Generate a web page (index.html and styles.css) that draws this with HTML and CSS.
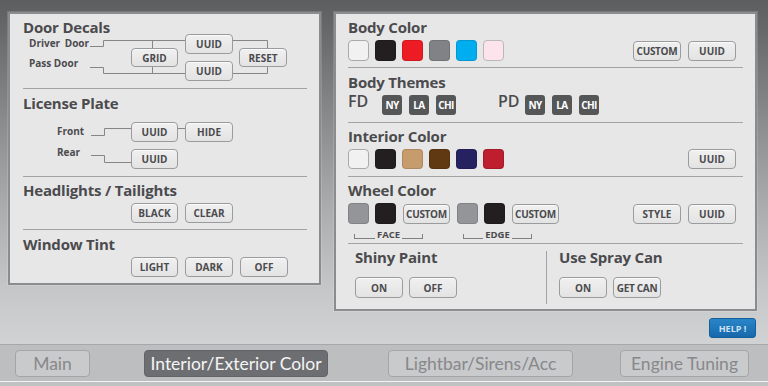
FILE: index.html
```html
<!DOCTYPE html>
<html>
<head>
<meta charset="utf-8">
<title>Interior/Exterior Color</title>
<link rel="stylesheet" href="styles.css">
</head>
<body>
<div class="screen">
  <div class="workspace">
    <section class="panel panel-left">
      <div class="group g1">
        <h2 class="title">Door Decals</h2>
        <div class="diagram d-door">
          <svg class="wires" width="284" height="52" viewBox="0 0 284 52">
            <path d="M67 10.5H80.5V4.5H162M129.5 4.5V12M210 4.5H244.5V12M67 31.5H80.5V37.5H162M129.5 31V37.5M210 37.5H244.5V31"/>
          </svg>
          <span class="lbl n-driver">Driver Door</span>
          <span class="lbl n-pass">Pass Door</span>
          <div class="btn node n-uuid1">UUID</div>
          <div class="btn node n-grid">GRID</div>
          <div class="btn node n-reset">RESET</div>
          <div class="btn node n-uuid2">UUID</div>
        </div>
      </div>
      <div class="group g2">
        <h2 class="title">License Plate</h2>
        <div class="diagram d-plate">
          <svg class="wires" width="284" height="64" viewBox="0 0 284 64">
            <path d="M68 23.5H81.5V16.5H108M155 16.5H162M68 43.5H81.5V50.5H108"/>
          </svg>
          <span class="lbl n-front">Front</span>
          <span class="lbl n-rear">Rear</span>
          <div class="btn node n-puuid">UUID</div>
          <div class="btn node n-hide">HIDE</div>
          <div class="btn node n-ruuid">UUID</div>
        </div>
      </div>
      <div class="group g3">
        <h2 class="title">Headlights / Tailights</h2>
        <div class="row opts">
          <div class="btn w47">BLACK</div>
          <div class="btn">CLEAR</div>
        </div>
      </div>
      <div class="group g4">
        <h2 class="title">Window Tint</h2>
        <div class="row opts">
          <div class="btn w47">LIGHT</div>
          <div class="btn">DARK</div>
          <div class="btn">OFF</div>
        </div>
      </div>
    </section>

    <div class="right-col">
      <section class="panel panel-right">
        <div class="group ga">
          <h2 class="title">Body Color</h2>
          <div class="row swrow">
            <span class="sw c-white"></span>
            <span class="sw c-black"></span>
            <span class="sw c-red"></span>
            <span class="sw c-gray"></span>
            <span class="sw c-cyan"></span>
            <span class="sw c-pink"></span>
            <div class="actions">
              <div class="btn tight">CUSTOM</div>
              <div class="btn">UUID</div>
            </div>
          </div>
        </div>
        <div class="group gb">
          <h2 class="title">Body Themes</h2>
          <div class="row themes">
            <span class="fd">FD</span>
            <span class="tb">NY</span>
            <span class="tb">LA</span>
            <span class="tb">CHI</span>
            <span class="fd pd">PD</span>
            <span class="tb">NY</span>
            <span class="tb">LA</span>
            <span class="tb">CHI</span>
          </div>
        </div>
        <div class="group gc">
          <h2 class="title">Interior Color</h2>
          <div class="row swrow">
            <span class="sw c-white"></span>
            <span class="sw c-black"></span>
            <span class="sw c-tan"></span>
            <span class="sw c-brown"></span>
            <span class="sw c-navy"></span>
            <span class="sw c-crimson"></span>
            <div class="actions">
              <div class="btn">UUID</div>
            </div>
          </div>
        </div>
        <div class="group gd">
          <h2 class="title">Wheel Color</h2>
          <div class="row wheelrow">
            <span class="sw c-wgray"></span>
            <span class="sw c-black"></span>
            <div class="btn w47 tight spaced">CUSTOM</div>
            <span class="sw c-wgray"></span>
            <span class="sw c-black"></span>
            <div class="btn w47 tight spaced">CUSTOM</div>
            <div class="actions">
              <div class="btn">STYLE</div>
              <div class="btn">UUID</div>
            </div>
          </div>
          <div class="brackets">
            <div class="brk"><span class="seg"></span><span class="bt">FACE</span><span class="seg"></span></div>
            <div class="brk"><span class="seg"></span><span class="bt">EDGE</span><span class="seg"></span></div>
          </div>
        </div>
        <div class="group ge">
          <div class="col col-l">
            <h2 class="title">Shiny Paint</h2>
            <div class="row pair">
              <div class="btn tall">ON</div>
              <div class="btn tall">OFF</div>
            </div>
          </div>
          <div class="vdiv"></div>
          <div class="col col-r">
            <h2 class="title">Use Spray Can</h2>
            <div class="row pair">
              <div class="btn tall">ON</div>
              <div class="btn tall tight">GET CAN</div>
            </div>
          </div>
        </div>
      </section>
      <div class="help-row">
        <div class="help">HELP !</div>
      </div>
    </div>
  </div>

  <nav class="tabbar">
    <div class="tab t-main">Main</div>
    <div class="tab t-int active">Interior/Exterior Color</div>
    <div class="tab t-light">Lightbar/Sirens/Acc</div>
    <div class="tab t-eng">Engine Tuning</div>
  </nav>
</div>
</body>
</html>
```
FILE: styles.css
```css
* { box-sizing: border-box; margin: 0; padding: 0; }
html, body { width: 768px; height: 386px; overflow: hidden; }
body {
  font-family: "Open Sans", "DejaVu Sans", sans-serif;
  color: #4b4b4d;
  background: #c0c1c3;
}
.screen { width: 768px; height: 386px; display: flex; flex-direction: column; }

.workspace {
  height: 344px;
  display: flex;
  align-items: flex-start;
  gap: 13px;
  padding: 12px 0 0 8px;
  background: linear-gradient(180deg, #5d5e60 0, #67686a 30px, #8a8b8d 120px, #acadaf 210px, #c6c7c9 290px, #d1d2d4 344px);
}

.panel {
  background: #e7e7e8;
  border: 2px solid #8b8c8e;
  box-shadow: 0 0 0 1px rgba(255, 255, 255, 0.15);
}
.panel-left { width: 313px; height: 273px; padding: 0 12px 0 13px; }
.right-col { width: 423px; display: flex; flex-direction: column; }
.panel-right { height: 299px; padding: 0 12px; }

.group { border-bottom: 1px solid #a3a4a6; }
.group:last-child { border-bottom: 0; }

.title {
  font-size: 15px;
  line-height: 18px;
  font-weight: 700;
  letter-spacing: -0.2px;
  color: #4b4b4d;
  white-space: nowrap;
}

/* left panel groups */
.g1 { height: 75px; padding-top: 4px; }
.g2 { height: 88px; padding-top: 5px; }
.g3 { height: 53px; padding-top: 4px; }
.g4 { height: 53px; padding-top: 5px; }

.row { display: flex; align-items: center; margin-top: 4px; }
.opts { gap: 7px; padding-left: 108px; }

.btn {
  display: flex;
  align-items: center;
  justify-content: center;
  width: 48px;
  height: 20px;
  border: 1px solid #9a9b9d;
  border-radius: 4px;
  background: linear-gradient(#f0f0f1, #e3e3e4);
  box-shadow: inset 0 1px 0 #fafafa;
  font-size: 10px;
  font-weight: 700;
  line-height: 1;
  color: #4b4b4d;
  white-space: nowrap;
}
.btn.w47 { width: 47px; }
.btn.tight { letter-spacing: -0.3px; }
.btn.tall { height: 21px; }

/* wiring diagrams */
.diagram { position: relative; }
.d-door { height: 52px; }
.d-plate { height: 64px; }
.wires { position: absolute; left: 0; top: 0; overflow: visible; }
.wires path { fill: none; stroke: #85868a; stroke-width: 1; }
.lbl {
  position: absolute;
  font-size: 10px;
  line-height: 13px;
  font-weight: 700;
  color: #4b4b4d;
  white-space: nowrap;
}
.node { position: absolute; }
.n-driver { left: 6px; top: 1px; word-spacing: 2px; }
.n-pass { left: 6px; top: 21px; }
.n-uuid1 { left: 162px; top: -2px; }
.n-grid { left: 108px; top: 12px; width: 47px; height: 19px; }
.n-reset { left: 216px; top: 12px; height: 19px; }
.n-uuid2 { left: 162px; top: 25px; }
.n-front { left: 34px; top: 13px; }
.n-rear { left: 34px; top: 34px; }
.n-puuid { left: 108px; top: 10px; width: 47px; }
.n-hide { left: 162px; top: 10px; }
.n-ruuid { left: 108px; top: 37px; width: 47px; }

/* right panel groups */
.ga { height: 54px; padding-top: 4px; }
.gb { height: 55px; padding-top: 5px; }
.gc { height: 54px; padding-top: 4px; }
.gd { height: 67px; padding-top: 4px; }
.ge { height: 65px; display: flex; align-items: flex-start; }

.swrow { gap: 6px; }
.actions { display: flex; gap: 7px; margin-left: auto; margin-right: 7px; }

.sw {
  width: 21px;
  height: 21px;
  border-radius: 4px;
  border: 1px solid rgba(0, 0, 0, 0.12);
}
.gc .sw { height: 20px; }
.c-white { background: #f1f1f2; border-color: #a9aaac; }
.c-black { background: #231f20; }
.c-red { background: #ed1c24; }
.c-gray { background: #808285; }
.c-cyan { background: #00aeef; }
.c-pink { background: #fde4ec; border-color: #b9b9bb; }
.c-tan { background: #c69c6d; }
.c-brown { background: #603913; }
.c-navy { background: #262262; }
.c-crimson { background: #be1e2d; }
.c-wgray { background: #939598; }

.themes { align-items: flex-start; gap: 7px; }
.fd {
  width: 27px;
  font-size: 16px;
  font-weight: 600;
  line-height: 13px;
  color: #4b4b4d;
}
.pd { margin-left: 35px; width: 20px; }
.tb {
  display: flex;
  align-items: center;
  justify-content: center;
  width: 20px;
  height: 20px;
  border-radius: 3px;
  background: #555658;
  color: #fff;
  font-size: 10px;
  font-weight: 700;
  letter-spacing: -0.6px;
}

.wheelrow { gap: 6px; }
.wheelrow .spaced { margin: 0 1px; }

.brackets { display: flex; gap: 40px; padding-left: 6px; margin-top: 6px; }
.brk { width: 69px; height: 9px; display: flex; align-items: flex-end; }
.seg { flex: 1; height: 5px; border-bottom: 1px solid #7f8083; }
.seg:first-child { border-left: 1px solid #7f8083; }
.seg:last-child { border-right: 1px solid #7f8083; }
.bt { font-size: 9.5px; line-height: 9px; font-weight: 700; padding: 0 2px; color: #4b4b4d; }

.col-l { width: 198px; padding: 4px 0 0 7px; }
.col-r { padding: 4px 0 0 12px; }
.vdiv { width: 1px; height: 53px; margin-top: 7px; background: #a3a4a6; }
.pair { gap: 6px; margin-top: 11px; }

.help-row { display: flex; justify-content: flex-end; padding: 7px 1px 0 0; }
.help {
  display: flex;
  align-items: center;
  justify-content: center;
  width: 47px;
  height: 20px;
  border-radius: 3px;
  border: 1px solid #145f9a;
  background: linear-gradient(#2a86c9, #1668ab);
  color: #cfe2f4;
  font-size: 9px;
  font-weight: 700;
}

/* tab bar */
.tabbar {
  height: 38px;
  border-top: 1px solid #a7a8aa;
  border-bottom: 1px solid #f3f3f4;
  background: #bdbec0;
  display: flex;
  align-items: flex-start;
  padding: 5px 0 0 15px;
}
.tab {
  height: 27px;
  display: flex;
  align-items: center;
  justify-content: center;
  border: 1px solid #a4a5a7;
  border-radius: 4px;
  background: #c9cacc;
  color: #87888a;
  font-family: Lato, "Open Sans", sans-serif;
  font-size: 17.5px;
  white-space: nowrap;
}
.tab.active { background: #6d6e71; border-color: #626365; color: #f4f4f5; }
.t-main { width: 75px; }
.t-int { width: 184px; margin-left: 54px; }
.t-light { width: 185px; margin-left: 60px; }
.t-eng { width: 129px; margin-left: 47px; }
```
